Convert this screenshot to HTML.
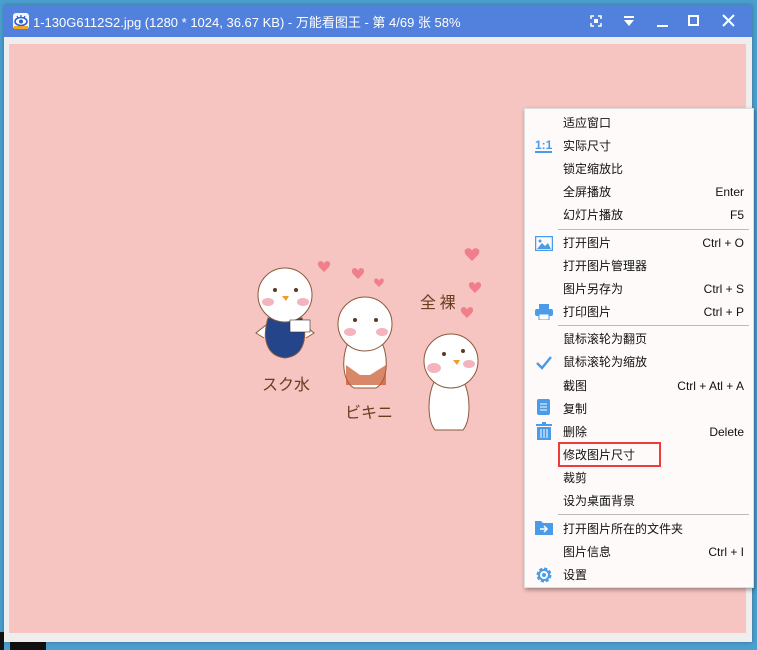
<!DOCTYPE html>
<html><head><meta charset="utf-8"><style>
*{margin:0;padding:0;box-sizing:border-box}
body{width:757px;height:650px;overflow:hidden;background:#4b9fcf;font-family:"Liberation Sans","Noto Sans CJK SC",sans-serif;position:relative}
.win{position:absolute;left:4px;top:5px;width:748px;height:637px;background:#eeeeee;box-shadow:0 0 4px rgba(0,0,0,.3)}
.tb{position:absolute;left:0;top:0;width:748px;height:32px;background:#5181dd;color:#fff;font-size:13px}
.tb .t{position:absolute;left:29px;top:7px;white-space:nowrap}
.pink{position:absolute;left:5px;top:39px;width:737px;height:589px;background:#f6c4c1}
.menu{position:absolute;left:524px;top:108px;width:230px;height:480px;background:#fffafa;box-shadow:1px 2px 4px rgba(0,0,0,.35);border:1px solid #ddd;font-size:12px;color:#111}
.it{position:absolute;left:38px;height:20px;line-height:20px;white-space:nowrap}
.sc{position:absolute;right:9px;height:20px;line-height:20px;white-space:nowrap}
.sep{position:absolute;left:33px;right:4px;height:1px;background:#bbb}
.ic{position:absolute;left:10px}
</style></head><body>
<div style="position:absolute;left:0;top:632px;width:4px;height:18px;background:#111"></div>
<div style="position:absolute;left:10px;top:642px;width:36px;height:8px;background:#111"></div>
<div class="win">
<div class="tb">
<svg style="position:absolute;left:9px;top:8px" width="16" height="16"><rect x="0" y="0" width="16" height="16" rx="3" fill="#f4f7ff"/><rect x="1" y="13" width="14" height="3" fill="#f6a623"/><ellipse cx="8" cy="8.5" rx="6" ry="4" fill="none" stroke="#2e62c9" stroke-width="1.6"/><circle cx="8" cy="8.5" r="2" fill="#2e62c9"/><path d="M4 3l1 2M8 2v2M12 3l-1 2" stroke="#2e62c9" stroke-width="1.2"/></svg>
<div class="t">1-130G6112S2.jpg (1280 * 1024, 36.67 KB) - 万能看图王 - 第 4/69 张 58%</div>
<svg style="position:absolute;left:586px;top:10px" width="12" height="12" fill="none" stroke="#fff" stroke-width="1.5"><path d="M1 4V1h3M8 1h3v3M11 8v3H8M4 11H1V8"/><rect x="4" y="4" width="4" height="4" fill="#fff" stroke="none"/></svg>
<svg style="position:absolute;left:619px;top:10px" width="12" height="12" fill="#fff"><rect x="1" y="1" width="10" height="2"/><path d="M1 5h10l-5 6z"/></svg>
<div style="position:absolute;left:653px;top:20px;width:11px;height:2px;background:#fff"></div>
<div style="position:absolute;left:684px;top:10px;width:11px;height:11px;border:2px solid #fff"></div>
<svg style="position:absolute;left:718px;top:9px" width="13" height="13" stroke="#fff" stroke-width="2"><path d="M1 1l11 11M12 1L1 12"/></svg>
</div>
<div class="pink"></div>
</div>
<svg style="position:absolute;left:240px;top:240px" width="260" height="200" font-family="Noto Sans CJK JP,sans-serif">
<g fill="#ef7f8b"><path d="M79 27c-4-6 4-8 5-3 1-5 9-3 5 3l-5 5z"/><path d="M113 34c-4-6 4-8 5-3 1-5 9-3 5 3l-5 5z"/><path d="M135 43c-3-5 3-6 4-2 1-4 7-3 4 2l-4 4z"/><path d="M226 15c-5-7 5-9 6-4 1-5 11-3 6 4l-6 6z"/><path d="M230 48c-4-6 4-8 5-3 1-5 9-3 5 3l-5 5z"/><path d="M222 73c-4-6 4-8 5-3 1-5 9-3 5 3l-5 5z"/></g>
<g stroke="#8a5a3a" stroke-width="1" fill="#fff">
<path d="M26 85l-10 8 8 5M64 85l10 8-8 5"/>
<path d="M28 78h34c6 20 2 38-17 40-19-2-23-20-17-40z" fill="#24458a"/>
<circle cx="45" cy="55" r="27"/>
<path d="M110 100c-8 10-10 40 4 48h22c14-8 12-38 4-48z"/>
<circle cx="125" cy="84" r="27"/>
<path d="M195 140c-8 15-8 40 0 50h28c8-10 8-35 0-50z"/>
<circle cx="211" cy="121" r="27"/>
</g>
<rect x="50" y="80" width="20" height="12" fill="#fff" stroke="#333" stroke-width=".6"/>
<path d="M106 125l14 10 10 0 16-10 0 20h-40z" fill="#c8542a" opacity=".7"/>
<g fill="#f5b3bd"><ellipse cx="28" cy="62" rx="6" ry="4"/><ellipse cx="63" cy="62" rx="6" ry="4"/><ellipse cx="110" cy="92" rx="6" ry="4"/><ellipse cx="142" cy="92" rx="6" ry="4"/><ellipse cx="194" cy="128" rx="7" ry="5"/><ellipse cx="229" cy="124" rx="6" ry="4"/></g>
<g fill="#5a3a22"><circle cx="35" cy="50" r="2"/><circle cx="56" cy="50" r="2"/><circle cx="115" cy="80" r="2"/><circle cx="136" cy="80" r="2"/><circle cx="204" cy="114" r="2"/><circle cx="223" cy="111" r="2"/></g>
<g fill="#f39a2a"><path d="M42 56h7l-3 5z"/><path d="M213 120h7l-3 5z"/></g>
<g font-size="16" fill="#6b3d1f"><text x="22" y="150">スク水</text><text x="105" y="178">ビキニ</text><text x="180" y="68">全 裸</text></g>
</svg>
<div class="menu">
<svg class="ic" style="top:29px" width="18" height="16"><text x="0" y="11" font-size="12" font-weight="bold" fill="#4a9be8" font-family="Liberation Sans">1:1</text><rect x="0" y="13" width="17" height="2" fill="#4a9be8"/></svg>
<svg class="ic" style="top:127px" width="18" height="15"><rect x=".5" y=".5" width="17" height="14" fill="none" stroke="#4a9be8" stroke-width="1.5"/><path d="M2 13l5-6 3 3 3-3 3 6z" fill="#4a9be8"/><circle cx="5" cy="5" r="1.5" fill="#4a9be8"/></svg>
<svg class="ic" style="top:195px" width="18" height="16" fill="#4a9be8"><rect x="4" y="0" width="10" height="5"/><rect x="0" y="5" width="18" height="7" rx="2"/><rect x="4" y="10" width="10" height="6" fill="#fff" stroke="#4a9be8"/></svg>
<svg class="ic" style="top:246px" width="18" height="15"><path d="M2 8l5 5L16 2" fill="none" stroke="#4a9be8" stroke-width="2.5"/></svg>
<svg class="ic" style="top:290px" width="18" height="17" fill="#4a9be8"><rect x="2" y="0" width="13" height="16" rx="2"/><path d="M5 5h7M5 8h7M5 11h7" stroke="#fff"/></svg>
<svg class="ic" style="top:313px" width="18" height="18" fill="#4a9be8"><rect x="1" y="2" width="16" height="2"/><rect x="7" y="0" width="4" height="2"/><rect x="2" y="5" width="14" height="13"/><path d="M6 7v9M9 7v9M12 7v9" stroke="#fff"/></svg>
<svg class="ic" style="top:411px" width="18" height="15" fill="#4a9be8"><path d="M0 1h6l2 2h10v12H0z"/><path d="M5 9h7M9 6l3 3-3 3" stroke="#fff" stroke-width="1.5" fill="none"/></svg>
<svg class="ic" style="top:457px" width="18" height="18"><circle cx="9" cy="9" r="6" fill="none" stroke="#4a9be8" stroke-width="3" stroke-dasharray="3 1.7"/><circle cx="9" cy="9" r="5" fill="none" stroke="#4a9be8" stroke-width="2"/><circle cx="9" cy="9" r="2" fill="#4a9be8"/></svg>
<div class="it" style="top:4px">适应窗口</div>
<div class="it" style="top:27px">实际尺寸</div>
<div class="it" style="top:50px">锁定缩放比</div>
<div class="it" style="top:73px">全屏播放</div><div class="sc" style="top:73px">Enter</div>
<div class="it" style="top:96px">幻灯片播放</div><div class="sc" style="top:96px">F5</div>
<div class="sep" style="top:120px"></div>
<div class="it" style="top:124px">打开图片</div><div class="sc" style="top:124px">Ctrl + O</div>
<div class="it" style="top:147px">打开图片管理器</div>
<div class="it" style="top:170px">图片另存为</div><div class="sc" style="top:170px">Ctrl + S</div>
<div class="it" style="top:193px">打印图片</div><div class="sc" style="top:193px">Ctrl + P</div>
<div class="sep" style="top:216px"></div>
<div class="it" style="top:220px">鼠标滚轮为翻页</div>
<div class="it" style="top:243px">鼠标滚轮为缩放</div>
<div class="it" style="top:267px">截图</div><div class="sc" style="top:267px">Ctrl + Atl + A</div>
<div class="it" style="top:290px">复制</div>
<div class="it" style="top:313px">删除</div><div class="sc" style="top:313px">Delete</div>
<div class="it" style="top:336px">修改图片尺寸</div>
<div style="position:absolute;left:33px;top:333px;width:103px;height:25px;border:2px solid #ee3b3b"></div>
<div class="it" style="top:359px">裁剪</div>
<div class="it" style="top:382px">设为桌面背景</div>
<div class="sep" style="top:405px"></div>
<div class="it" style="top:410px">打开图片所在的文件夹</div>
<div class="it" style="top:433px">图片信息</div><div class="sc" style="top:433px">Ctrl + I</div>
<div class="it" style="top:456px">设置</div>
</div>
</body></html>
